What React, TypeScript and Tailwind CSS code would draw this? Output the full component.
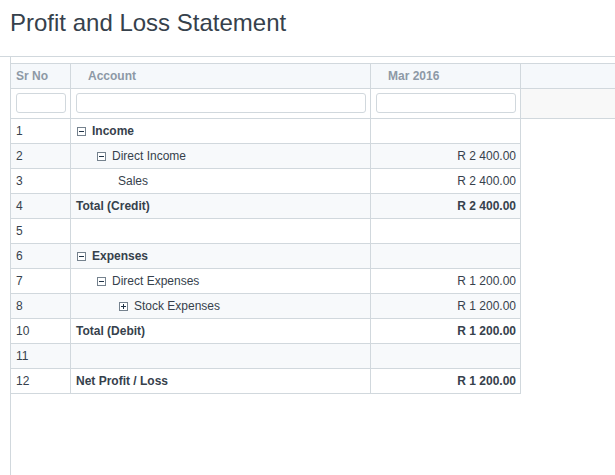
import React from "react";

type Row = {
  no: string;
  label: string;
  level: number;
  toggle?: "minus" | "plus";
  bold?: boolean;
  amount?: string;
};

const rows: Row[] = [
  { no: "1", label: "Income", level: 0, toggle: "minus", bold: true },
  { no: "2", label: "Direct Income", level: 1, toggle: "minus", amount: "R 2 400.00" },
  { no: "3", label: "Sales", level: 2, amount: "R 2 400.00" },
  { no: "4", label: "Total (Credit)", level: 0, bold: true, amount: "R 2 400.00" },
  { no: "5", label: "", level: 0 },
  { no: "6", label: "Expenses", level: 0, toggle: "minus", bold: true },
  { no: "7", label: "Direct Expenses", level: 1, toggle: "minus", amount: "R 1 200.00" },
  { no: "8", label: "Stock Expenses", level: 2, toggle: "plus", amount: "R 1 200.00" },
  { no: "10", label: "Total (Debit)", level: 0, bold: true, amount: "R 1 200.00" },
  { no: "11", label: "", level: 0 },
  { no: "12", label: "Net Profit / Loss", level: 0, bold: true, amount: "R 1 200.00" },
];

function Toggle({ kind }: { kind: "minus" | "plus" }) {
  return (
    <svg width="9" height="9" viewBox="0 0 9 9" className="ml-px mr-[6px] shrink-0">
      <rect x="0.5" y="0.5" width="8" height="8" fill="white" stroke="#75828e" />
      <line x1="2" y1="4.5" x2="7" y2="4.5" stroke="#1f3347" />
      {kind === "plus" && <line x1="4.5" y1="2" x2="4.5" y2="7" stroke="#1f3347" />}
    </svg>
  );
}

const indents = ["w-0", "w-[20px]", "w-[42px]"];

export default function App() {
  return (
    <div className="w-[615px] h-[475px] bg-white overflow-hidden font-['Liberation_Sans',Arial,sans-serif] text-[#36414c]">
      <div className="h-[57px] border-b border-[#d1d8dd] pl-[10px] pt-[9px] text-[24px] leading-[28px]">
        Profit and Loss Statement
      </div>
      <div className="ml-[10px] border-l border-[#d1d8dd] h-[418px] pt-[6px] text-[12px]">
        {/* header */}
        <div className="flex h-[26px] border-y border-[#d1d8dd] bg-[#f5f8fb] font-bold text-[#8d99a6]">
          <div className="w-[60px] border-r border-[#d1d8dd] pl-[5px] flex items-center">Sr No</div>
          <div className="w-[300px] border-r border-[#d1d8dd] pl-[17px] flex items-center">Account</div>
          <div className="w-[150px] border-r border-[#d1d8dd] pl-[17px] flex items-center">Mar 2016</div>
          <div className="flex-1" />
        </div>
        {/* filter row */}
        <div className="flex h-[30px] border-b border-[#d1d8dd]">
          <div className="w-[60px] border-r border-[#d1d8dd] bg-white pl-[5px] pt-[4px]">
            <div className="w-[50px] h-[20px] rounded-[3px] border border-[#d1d8dd] bg-white" />
          </div>
          <div className="w-[300px] border-r border-[#d1d8dd] bg-white pl-[5px] pt-[4px]">
            <div className="w-[290px] h-[20px] rounded-[3px] border border-[#d1d8dd] bg-white" />
          </div>
          <div className="w-[150px] border-r border-[#d1d8dd] bg-white pl-[5px] pt-[4px]">
            <div className="w-[140px] h-[20px] rounded-[3px] border border-[#d1d8dd] bg-white" />
          </div>
          <div className="flex-1 bg-[#f8f8f8]" />
        </div>
        {/* rows */}
        {rows.map((r, i) => (
          <div
            key={r.no}
            className={`flex w-[510px] h-[25px] border-b border-[#d1d8dd] ${i % 2 === 1 ? "bg-[#f7f9fb]" : "bg-white"}`}
          >
            <div className="w-[60px] border-r border-[#d1d8dd] pl-[5px] flex items-center">{r.no}</div>
            <div className={`w-[300px] border-r border-[#d1d8dd] pl-[5px] flex items-center ${r.bold ? "font-bold" : ""}`}>
              <span className={`${indents[r.level]} shrink-0`} />
              {r.toggle && <Toggle kind={r.toggle} />}
              <span>{r.label}</span>
            </div>
            <div className={`w-[150px] border-r border-[#d1d8dd] pr-[4px] flex items-center justify-end ${r.bold ? "font-bold" : ""}`}>
              {r.amount ?? ""}
            </div>
          </div>
        ))}
      </div>
    </div>
  );
}
